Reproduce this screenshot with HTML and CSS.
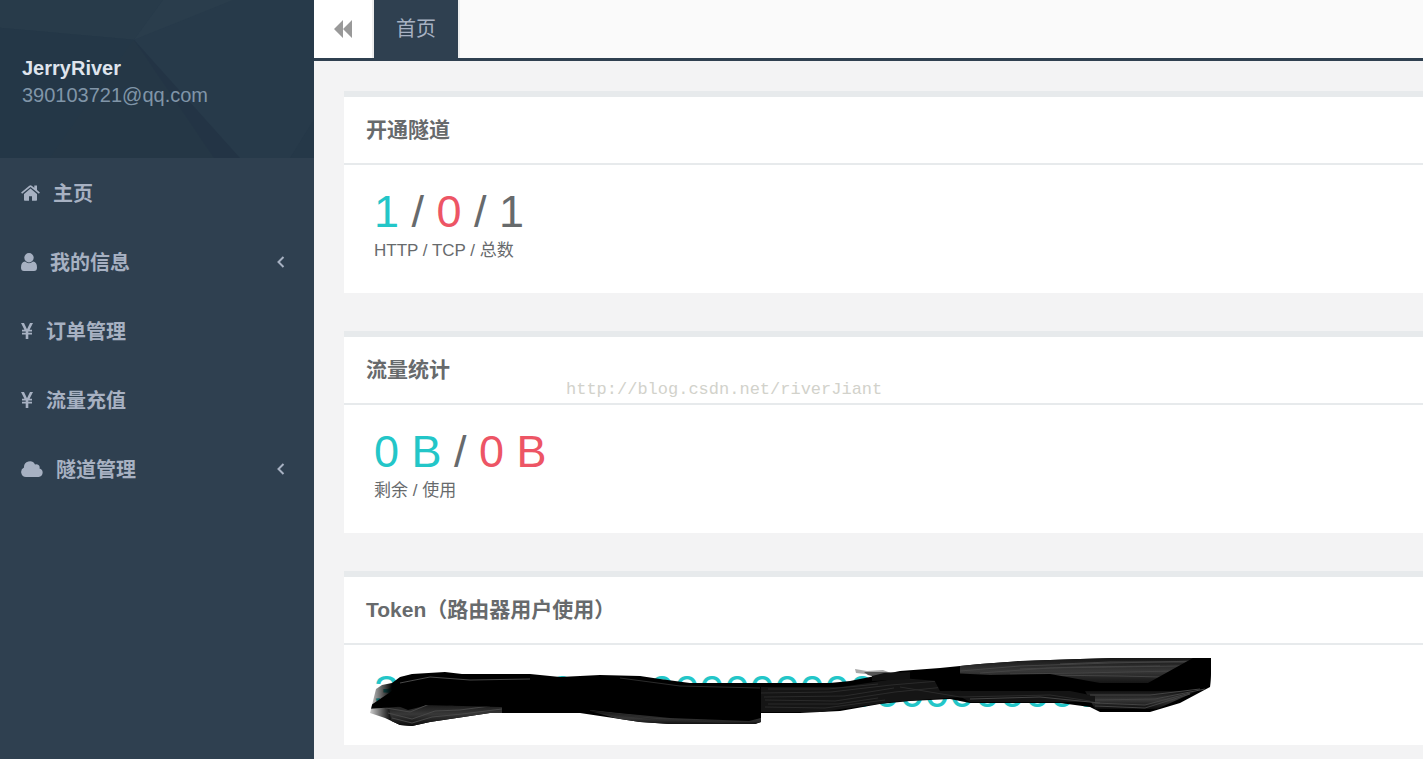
FILE: index.html
```
<!DOCTYPE html>
<html lang="zh-CN">
<head>
<meta charset="utf-8">
<title>首页</title>
<link rel="stylesheet" href="styles.css">
</head>
<body>
<div class="layout">
  <aside class="sidebar">
    <header class="profile">
      <svg class="profile-art" viewBox="0 0 314 159" preserveAspectRatio="none" aria-hidden="true">
        <path fill="#273a4a" d="M0 0h314v159H0z"/>
        <path fill="#283b4a" d="M0 0h163l-29 40L0 28z"/>
        <path fill="#2a3d4c" d="M163 0h70l-99 40z"/>
        <path fill="#243747" d="M0 28l134 12-50 70L50 159H0z"/>
        <path fill="#253746" d="M84 110l50-70 80 119H50z"/>
        <path fill="#233445" d="M134 40l106 119h-26z"/>
        <path fill="#253848" d="M314 120v39h-24z"/>
      </svg>
      <strong class="profile-name">JerryRiver</strong>
      <span class="profile-mail">390103721@qq.com</span>
    </header>
    <nav class="menu">
      <a class="menu-item" href="#">
        <svg class="icon" width="19" height="16" viewBox="0 0 19 16" aria-hidden="true"><path d="M9.500 3.600L3 9v6q0 .8.800.8H8v-4.500h3v4.500h4.200q.8 0 .8-.8V9z"/><path d="M18.900 7.500L16 5.100V.5h-2.700v2.300L10.700.7Q9.500-.2 8.300.7L.1 7.500l1 1.300L9.500 2l8.400 6.800z"/></svg>
        <span>主页</span>
      </a>
      <a class="menu-item" href="#">
        <svg class="icon" width="16" height="18" viewBox="0 0 16 18" aria-hidden="true"><circle cx="8" cy="4.800" r="4.700"/><path d="M4 8.500Q8 12 12 8.500q4 .3 4 6Q16 18 13 18H3q-3 0-3-3.500 0-5.700 4-6z"/></svg>
        <span>我的信息</span>
        <svg class="arrow" width="8" height="12" viewBox="0 0 8 12" aria-hidden="true"><path d="M6.500 1L1.500 6l5 5"/></svg>
      </a>
      <a class="menu-item" href="#">
        <svg class="icon" width="12" height="16" viewBox="0 0 12 16" aria-hidden="true"><path d="M0 0h3L6 6.300 9 0h3L8.600 6.700H11v1.700H7.300v1.400H11v1.700H7.300V16H4.700v-4.500H1V9.800h3.700V8.400H1V6.700h2.400z"/></svg>
        <span>订单管理</span>
      </a>
      <a class="menu-item" href="#">
        <svg class="icon" width="12" height="16" viewBox="0 0 12 16" aria-hidden="true"><path d="M0 0h3L6 6.300 9 0h3L8.600 6.700H11v1.700H7.300v1.400H11v1.700H7.300V16H4.700v-4.500H1V9.800h3.700V8.400H1V6.700h2.400z"/></svg>
        <span>流量充值</span>
      </a>
      <a class="menu-item" href="#">
        <svg class="icon" width="22" height="16" viewBox="0 0 22 16" aria-hidden="true"><path d="M5 16a5 5 0 0 1-2-9.500A5.800 5.800 0 0 1 14 3.600a3.200 3.200 0 0 1 4.500 3.800A4.400 4.400 0 0 1 17.600 16z"/></svg>
        <span>隧道管理</span>
        <svg class="arrow" width="8" height="12" viewBox="0 0 8 12" aria-hidden="true"><path d="M6.500 1L1.500 6l5 5"/></svg>
      </a>
    </nav>
  </aside>

  <main class="main">
    <div class="topbar">
      <button class="collapse" type="button" aria-label="向左滚动标签">
        <svg width="18" height="18" viewBox="0 0 18 18" aria-hidden="true"><path d="M0 9l9-9v9l9-9v18l-9-9v9z"/></svg>
      </button>
      <a class="tab" href="#">首页</a>
    </div>

    <div class="content">
      <section class="card">
        <h5 class="card-title">开通隧道</h5>
        <div class="card-body">
          <p class="figure"><span class="teal">1</span> / <span class="red">0</span> / 1</p>
          <p class="caption">HTTP / TCP / 总数</p>
        </div>
      </section>
      <section class="card">
        <h5 class="card-title">流量统计</h5>
        <div class="card-body">
          <p class="figure"><span class="teal">0 B</span> / <span class="red">0 B</span></p>
          <p class="caption">剩余 / 使用</p>
        </div>
        <span class="watermark">http://blog.csdn.net/riverJiant</span>
      </section>
      <section class="card">
        <h5 class="card-title">Token（路由器用户使用）</h5>
        <div class="card-body token">
          <p class="figure teal">3000000000000000000000000000000</p>
          <svg class="scribble" width="880" height="100" viewBox="344 644 880 100" aria-hidden="true">
            <defs>
              <linearGradient id="fade" gradientUnits="userSpaceOnUse" x1="370" y1="0" x2="392" y2="0"><stop offset="0" stop-color="#000" stop-opacity=".2"/><stop offset="1" stop-color="#000"/></linearGradient>
              <linearGradient id="sheen" x1="0" y1="0" x2="0" y2="1"><stop offset="0" stop-color="#111"/><stop offset=".5" stop-color="#383838"/><stop offset="1" stop-color="#0c0c0c"/></linearGradient>
              <clipPath id="ink"><path d="M376 688L382 684 392 682 400 676 412 673 445 671 462 673 530 673 560 676 600 674 640 675 660 678 690 682H830L850 680 870 676 900 670 940 667 980 663 1020 660 1080 658 1115 657H1211V672L1210 686 1180 702 1150 711H1100L1090 706 1060 702H970L950 698 910 700 880 703 840 710 800 712H761V721L755 723H670L640 721 600 715 580 712H490L470 715 450 718 430 721 412 725 400 724 385 717 370 712z"/></clipPath>
            </defs>
            <g clip-path="url(#ink)">
              <path fill="url(#fade)" d="M360 644h860v90H360z"/>
              <path fill="url(#sheen)" d="M388 701l20 8 24-6 40-2 30 4v20H392z"/>
              <path fill="url(#sheen)" d="M960 663l150-8h95l-52 30h-48l-60-10-85-1z"/>
              <path fill="url(#sheen)" d="M1085 690h112l-40 18h-62z"/>
              <path fill="url(#sheen)" d="M590 710l90 6h81v8H640z"/>
              <path fill="#151515" d="M761 686h80l60-9 60 5v14l-70 5-70 10h-60z"/>
              <path fill="#141414" d="M950 690h120l25 5v6H970z"/>
              <g fill="none" stroke="#484848" stroke-width="1">
                <path d="M386 707l24 4 22-9 20 2 30-5 60 5M388 712l24 6 23-8 25-1 30-4M392 717l20 5 20-6 30-3 40-5M400 682l30-6 40 3 60-1"/>
                <path stroke="#2b2b2b" d="M590 709l60 7 60 2 51-2M620 714l40 5 60 2 41-1M620 677l60 8 80 2M761 692l70-1 60-7 60-5M765 699l70 1 60-9 70-7M765 706l60 1 60-8M900 686l60 10 90-2 40 6M768 688l60 0 50-5M764 696l80-1 50-8M768 703l70 0 40-6"/>
              </g>
              <g fill="none" stroke="#444" stroke-width="1">
                <path d="M960 670l60-5 90-3 88-2M980 672l70-5 130-2M1010 673l70-1 95-2M1040 674l80 1 42 1M1020 668l60-2 80-1M1060 663l50-2 80 0M1095 699l60-1 50-10M1095 705l50 2 45-14M1095 702l50 2 45-12M1090 694l60 0 50-6M970 698l70-2 60 6"/>
              </g>
              <path fill="#000" d="M392 690l40-6 68-3 90 0 171 10v26l-12 3-79-3-80-8-90-3-75-2-60 4zM930 671l60 3 60-1 50 9h48l45-25h18v29H1100l-60 3-100 1z"/>
            </g>
            <path fill="#aaa" d="M855 668l12 2 16-1 8 3-16 2-19-2z"/>
            <path fill="#555" d="M864 671l22 0 24 2-28 5-14-4z"/>
            <path fill="#111" d="M872 675l12-3 26-1v7l-38 2z"/>
          </svg>
        </div>
      </section>
    </div>
  </main>
</div>
</body>
</html>
```
FILE: styles.css
```
* {
  box-sizing: border-box;
}

body {
  margin: 0;
  background: #f3f3f4;
  color: #676a6c;
  font-family: "Liberation Sans", "Noto Sans CJK SC", sans-serif;
  font-size: 20px;
}

a {
  text-decoration: none;
}

.layout {
  display: flex;
  min-height: 100vh;
}

.sidebar {
  flex: 0 0 314px;
  background: #2f4050;
}

.profile {
  position: relative;
  display: flex;
  flex-direction: column;
  padding: 55px 22px 49px;
  line-height: 27px;
}

.profile-art {
  position: absolute;
  inset: 0;
  width: 100%;
  height: 100%;
}

.profile-name,
.profile-mail {
  position: relative;
}

.profile-name {
  color: #dfe4ed;
}

.profile-mail {
  color: #8095a8;
}

.menu-item {
  display: flex;
  align-items: center;
  gap: 13px;
  height: 69px;
  padding: 0 29px 0 21px;
  color: #a7b1c2;
  font-weight: bold;
}

.icon {
  fill: #a7b1c2;
}

.arrow {
  margin-left: auto;
  fill: none;
  stroke: #a7b1c2;
  stroke-width: 2;
}

.main {
  flex: 1;
  min-width: 0;
}

.topbar {
  display: flex;
  height: 61px;
  border-bottom: 3px solid #2f4050;
  background: #fafafa;
}

.collapse {
  display: flex;
  align-items: center;
  justify-content: center;
  width: 60px;
  padding: 0;
  border: 0;
  border-right: 2px solid #eee;
  background: #fff;
}

.collapse svg {
  fill: #999;
}

.tab {
  padding: 0 22px;
  border-right: 2px solid #eee;
  background: #2f4050;
  color: #a7b1c2;
  line-height: 58px;
}

.content {
  display: grid;
  gap: 38px;
  padding: 30px 0 0 30px;
}

.card {
  position: relative;
  border-top: 6px solid #e7eaec;
  background: #fff;
}

.card-title {
  margin: 0;
  padding: 18px 22px;
  border-bottom: 2px solid #e7eaec;
  font-size: 21px;
  line-height: 30px;
}

.card-body {
  padding: 22px 30px 28px;
}

.card-body.token {
  position: relative;
}

.figure {
  margin: 0;
  font-size: 45px;
  line-height: 50px;
}

.caption {
  margin: 0;
  font-size: 17px;
  line-height: 28px;
}

.teal {
  color: #23c6c8;
}

.red {
  color: #ed5565;
}

.watermark {
  position: absolute;
  top: 43px;
  left: 222px;
  color: #d2d2cb;
  font-family: "Liberation Mono", monospace;
  font-size: 17px;
  line-height: 20px;
}

.scribble {
  position: absolute;
  top: 0;
  left: 0;
}
```
